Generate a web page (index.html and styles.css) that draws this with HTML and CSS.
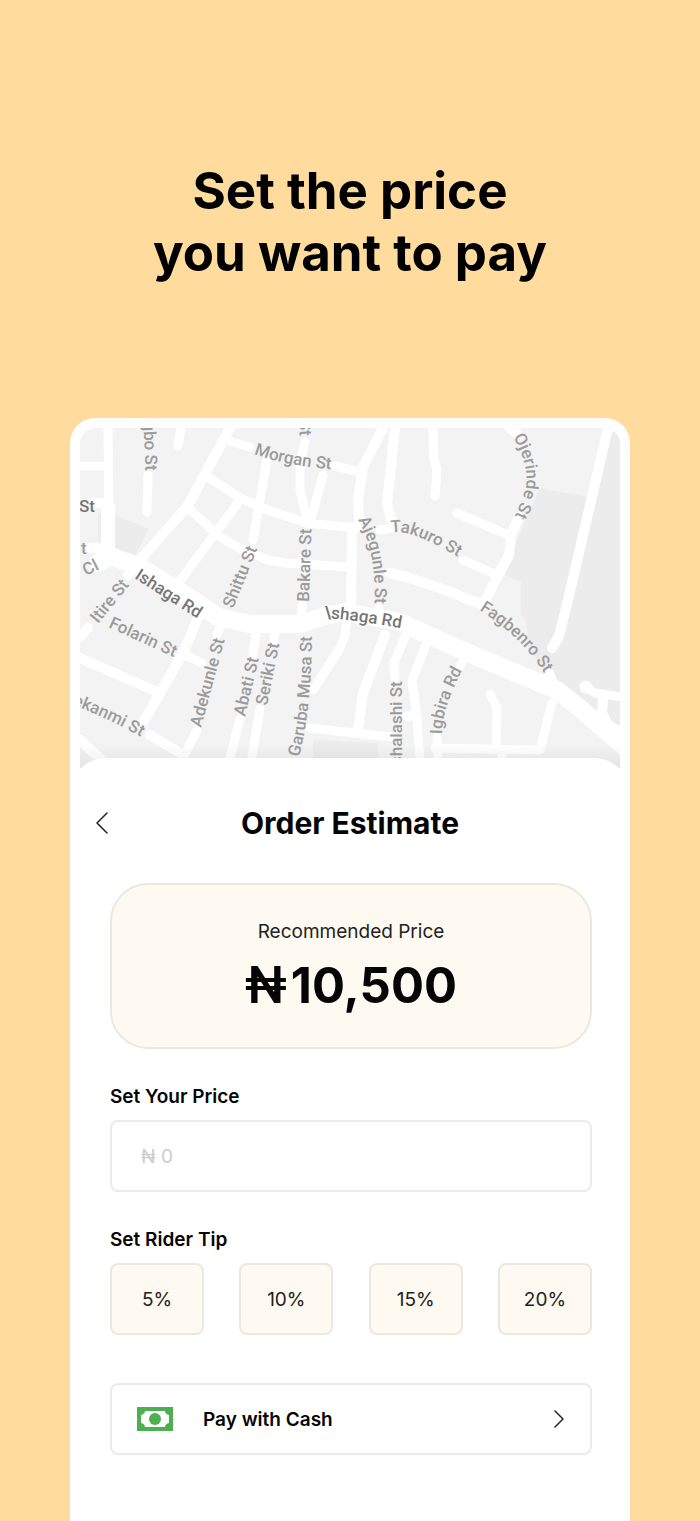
FILE: index.html
```html
<!DOCTYPE html>
<html lang="en">
<head>
<meta charset="utf-8">
<meta name="viewport" content="width=device-width, initial-scale=1">
<title>Set the price you want to pay</title>
<link rel="stylesheet" href="styles.css">
</head>
<body>
<main class="page">
  <h1 class="headline">Set the price<br>you want to pay</h1>
  <section class="phone">
    <div class="map">
      <svg class="map-art" viewBox="80 428 540 342" preserveAspectRatio="xMidYMin slice" role="img" aria-label="Street map around Ishaga Rd">
        <defs>
          <linearGradient id="shade" x1="0" y1="0" x2="0" y2="1">
            <stop offset="0" stop-color="#000" stop-opacity="0"/>
            <stop offset="1" stop-color="#000" stop-opacity=".07"/>
          </linearGradient>
          <path id="p-gbo" d="M143 422Q145 445 146 490"/>
          <path id="p-top" d="M299 412L300 450"/>
          <path id="p-morgan" d="M254 454Q292 468 347 470"/>
          <path id="p-ojerinde" d="M513 437Q529 463 526 486Q523 500 510 526"/>
          <path id="p-takuro" d="M391 533Q410 527 468 563"/>
          <path id="p-ajegunle" d="M358 520Q378 552 374 613"/>
          <path id="p-bakare" d="M309 602L312 515"/>
          <path id="p-shittu" d="M233 609L265 530"/>
          <path id="p-itire" d="M98 624L141 571"/>
          <path id="p-ishaga1" d="M134 578L215 630"/>
          <path id="p-folarin" d="M108 627L191 665"/>
          <path id="p-ishaga2" d="M324 618Q365 621 410 630"/>
          <path id="p-adekunle" d="M201 728L229 624"/>
          <path id="p-abati" d="M245 717L262 645"/>
          <path id="p-seriki" d="M267 706L282 630"/>
          <path id="p-garuba" d="M299 757Q312 710 312 625"/>
          <path id="p-shalashi" d="M402 765L402 670"/>
          <path id="p-igbira" d="M442 734Q442 705 468 660"/>
          <path id="p-fagbenro" d="M479 610Q525 639 547 678"/>
          <path id="p-ekanmi" d="M60 700Q110 718 155 745"/>
          <path id="p-cl" d="M86 576L104 567"/>
        </defs>
        <path class="land" d="M80 428h540v342H80z"/>
        <g class="block">
          <path d="M115 515L149 529L135 556L115 550zM98 513h6v34h-6zM313 740L378 743V770H313z"/>
          <path d="M540 488L587 497L606 428H620V740L552 680L530 650L525 618L521 615V582L505 575L515 545z"/>
        </g>
        <g class="roads">
          <path class="narrow" d="M108 428L109 503M80 466H108M148 475L147 512M181 428L178 446M225 440L250 447M335 466L360 472M208 477L240 498L270 511L307 523L357 528M187 507L218 535L237 547L268 560L284 563L350 567M240 500L177 585M267 460L253 540M305 442L300 463L300 490L308 523M323 475L310 523M433 428L434 460L437 470L435 496M380 530L391 528M457 513L508 535M463 560L497 575"/>
          <path class="narrow" d="M185 655L202 663M222 622L217 635M257 628L253 654M275 628L274 640M302 605V622M240 719L229 762M260 709L251 762M197 730L182 760M347 620L345 635L340 648L313 690M405 637L394 663L395 678M425 647L412 680L417 717L420 760M406 716H415M310 728L390 737M437 737L438 760M435 748L540 750L552 703M490 694L497 708L496 747M502 750V762M462 663L460 667M379 608V615"/>
          <path class="medium" d="M230 428L187 507L137 563M383 428L363 467L358 500L359 520M352 527L351 615M395 428L387 503L391 519M389 573L407 577L445 590L483 605M510 428L517 434M519 517L511 535L509 555L498 575L486 599M608 428L568 600L559 636L552 648M549 673L553 684M198 618L183 653L143 723M80 658L153 690M80 740L107 765M150 735L182 754M94 503H108M90 548H104M137 563L128 575M80 637L88 628M603 698L602 713L608 725L622 733M385 635L363 693L358 730"/>
          <path class="main" d="M98 563L110 556L138 566L190 598L218 617L250 624L300 624L325 616L345 612L400 622L430 636L480 658L557 690L582 710L628 750"/>
          <path class="narrow" d="M587 688L595 693L622 697"/>
          <circle cx="586" cy="687" r="3"/>
          <path class="wide" d="M108 507V555M575 706L628 752"/>
        </g>
        <g class="labels">
          <text><textPath href="#p-gbo">gbo St</textPath></text>
          <text><textPath href="#p-top" startOffset="8">St</textPath></text>
          <text><textPath href="#p-morgan">Morgan St</textPath></text>
          <text><textPath href="#p-ojerinde">Ojerinde St</textPath></text>
          <text><textPath href="#p-takuro">Takuro St</textPath></text>
          <text><textPath href="#p-ajegunle">Ajegunle St</textPath></text>
          <text><textPath href="#p-bakare">Bakare St</textPath></text>
          <text><textPath href="#p-shittu">Shittu St</textPath></text>
          <text><textPath href="#p-itire">Itire St</textPath></text>
          <text class="strong"><textPath href="#p-ishaga1">Ishaga Rd</textPath></text>
          <text><textPath href="#p-folarin">Folarin St</textPath></text>
          <text class="strong"><textPath href="#p-ishaga2">\shaga Rd</textPath></text>
          <text><textPath href="#p-adekunle">Adekunle St</textPath></text>
          <text><textPath href="#p-abati">Abati St</textPath></text>
          <text><textPath href="#p-seriki">Seriki St</textPath></text>
          <text><textPath href="#p-garuba">Garuba Musa St</textPath></text>
          <text><textPath href="#p-shalashi">shalashi St</textPath></text>
          <text><textPath href="#p-igbira">Igbira Rd</textPath></text>
          <text><textPath href="#p-fagbenro">Fagbenro St</textPath></text>
          <text><textPath href="#p-ekanmi" startOffset="13">ekanmi St</textPath></text>
          <text><textPath href="#p-cl">Cl</textPath></text>
          <text class="strong" x="79" y="512">St</text>
          <text x="81" y="554">t</text>
        </g>
        <path fill="url(#shade)" d="M80 744h540v26H80z"/>
      </svg>
    </div>
    <div class="sheet">
      <header class="bar">
        <button class="back" type="button" aria-label="Back">
          <svg class="chevron-back" viewBox="0 0 14 24" aria-hidden="true"><path d="M12 2L2 12L12 22"/></svg>
        </button>
        <h2 class="title">Order Estimate</h2>
      </header>
      <div class="content">
        <div class="quote">
          <p class="quote-label">Recommended Price</p>
          <p class="quote-price"><span class="naira">₦</span><span>10,500</span></p>
        </div>
        <label class="field-label" for="price">Set Your Price</label>
        <input class="field" id="price" type="text" inputmode="numeric" placeholder="₦ 0">
        <p class="field-label" id="tip-label">Set Rider Tip</p>
        <div class="tips" role="group" aria-labelledby="tip-label">
          <button class="tip" type="button">5%</button>
          <button class="tip" type="button">10%</button>
          <button class="tip" type="button">15%</button>
          <button class="tip" type="button">20%</button>
        </div>
        <button class="pay" type="button">
          <svg class="cash" viewBox="0 0 36 24" aria-hidden="true">
            <path fill="#4caf50" d="M0 0h36v24H0z"/>
            <path fill="#fff" d="M8 4H28C28 6 29.500 7.500 32 8V16C29.500 16.500 28 18 28 20H8C8 18 6.500 16.500 4 16V8C6.500 7.500 8 6 8 4z"/>
            <circle cx="18" cy="12" r="6" fill="#4caf50"/>
          </svg>
          <span>Pay with Cash</span>
          <svg class="chevron-next" viewBox="0 0 12 20" aria-hidden="true"><path d="M2 2L10 10L2 18"/></svg>
        </button>
      </div>
    </div>
  </section>
</main>
</body>
</html>
```
FILE: styles.css
```css
* { box-sizing: border-box; }

body {
  margin: 0;
  background: #ffdc9e;
  color: #050505;
  font-family: Inter, "Liberation Sans", sans-serif;
  font-size: 19px;
}

h1, h2, p { margin: 0; }

button, input { font: inherit; color: inherit; }

.page {
  display: flex;
  flex-direction: column;
  min-height: 100vh;
  padding: 160px 10% 0;
}

.headline {
  margin-bottom: 134px;
  font-size: 51px;
  font-weight: 700;
  line-height: 62px;
  text-align: center;
  color: #000;
}

.phone {
  flex: 1;
  display: flex;
  flex-direction: column;
  background: #fff;
  border-radius: 25px 25px 0 0;
}

.map {
  height: 350px;
  padding: 10px 10px 0;
}

.map-art {
  display: block;
  width: 100%;
  height: 100%;
  border-radius: 16px 16px 0 0;
}

.land { fill: #f3f3f3; }
.block { fill: #ececec; }

.roads {
  fill: none;
  stroke: #fff;
  stroke-linecap: round;
  stroke-linejoin: round;
}

.roads circle { fill: #fff; stroke-width: 7px; }
.narrow { stroke-width: 9px; }
.medium { stroke-width: 10px; }
.wide { stroke-width: 14px; }
.main { stroke-width: 18px; }

.labels {
  fill: #9b9b9b;
  font-family: Roboto, "Liberation Sans", sans-serif;
  font-size: 17px;
  font-weight: 500;
}

.strong { fill: #757575; }

.sheet {
  position: relative;
  flex: 1;
  margin-top: -10px;
  padding-bottom: 64px;
  background: #fff;
  border-radius: 36px 36px 0 0;
}

.bar {
  display: grid;
  grid-template-columns: 40px 1fr 40px;
  align-items: center;
  height: 125px;
  padding: 4px 12px 0;
}

.back {
  display: flex;
  justify-content: center;
  padding: 8px;
  border: 0;
  background: none;
}

.chevron-back { width: 14px; height: 24px; }
.chevron-next { width: 12px; height: 20px; margin-left: auto; }

.chevron-back path,
.chevron-next path {
  fill: none;
  stroke: #222;
  stroke-width: 1.5px;
  stroke-linecap: round;
  stroke-linejoin: round;
}

.title {
  font-size: 30px;
  font-weight: 700;
  line-height: 40px;
  text-align: center;
}

.content {
  display: flex;
  flex-direction: column;
  padding: 0 38px 0 40px;
}

.quote {
  padding: 32px 16px 24px;
  border: 2px solid #ece8e0;
  border-radius: 38px;
  background: #fef9f1;
  text-align: center;
}

.quote-label { line-height: 30px; color: #222; }

.quote-price {
  display: flex;
  align-items: center;
  justify-content: center;
  gap: 4px;
  height: 76px;
  font-size: 49px;
  font-weight: 700;
}

.naira {
  font-family: Roboto, "Liberation Sans", sans-serif;
  font-size: 52px;
  font-weight: 500;
}

.field-label {
  margin-top: 32px;
  padding-bottom: 7px;
  font-weight: 600;
  line-height: 32px;
}

.field,
.tip,
.pay {
  height: 72px;
  border: 2px solid #ebebeb;
  border-radius: 8px;
  background: #fff;
}

.field { width: 100%; padding: 0 29px; }
.field::placeholder { color: #ccc; opacity: 1; }

.tips { display: flex; justify-content: space-between; }

.tip {
  width: 94px;
  padding: 0;
  border-color: #ece8e0;
  background: #fef9f1;
  color: #222;
}

.pay {
  display: flex;
  align-items: center;
  gap: 30px;
  margin-top: 48px;
  padding: 0 25px;
  font-weight: 600;
}

.cash { width: 36px; height: 24px; }
```
